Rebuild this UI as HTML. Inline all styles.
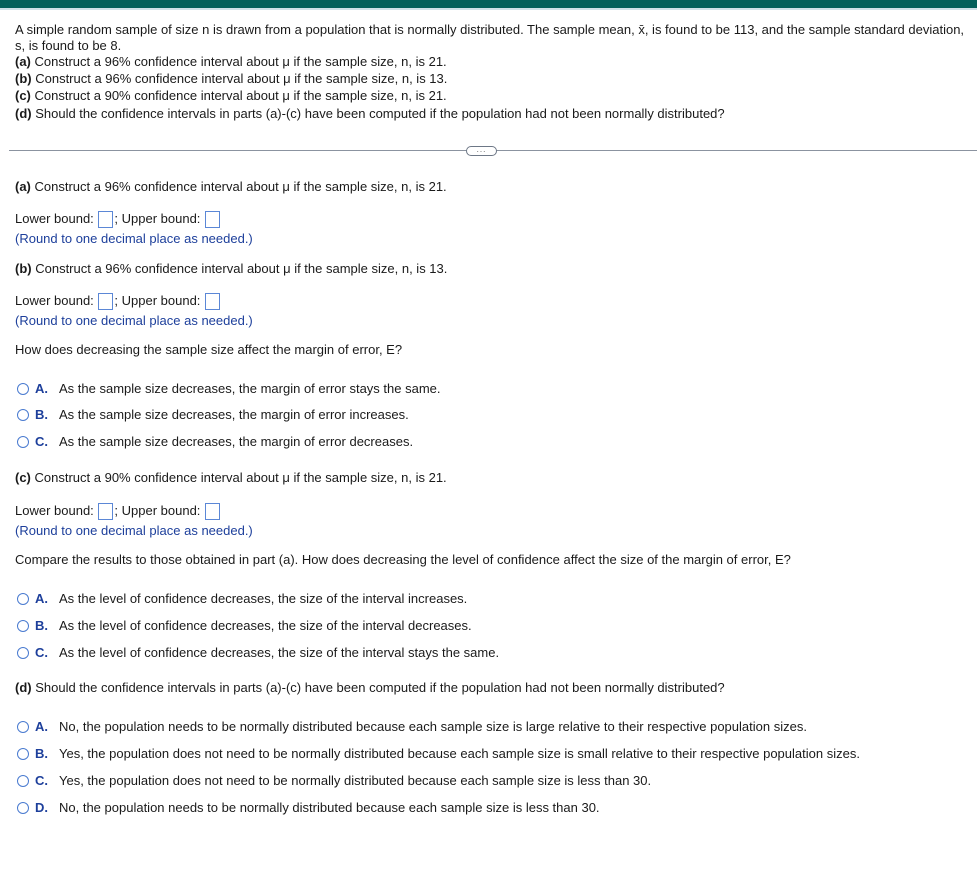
<!DOCTYPE html>
<html><head><meta charset="utf-8"><style>
*{margin:0;padding:0;box-sizing:border-box}
body{width:977px;height:872px;background:#fff;font-family:"Liberation Sans",Arial,sans-serif;font-size:13px;color:#1a1a1a;position:relative;overflow:hidden}
.bar{position:absolute;left:0;top:0;width:977px;height:8px;background:#04605a}
.bar2{position:absolute;left:0;top:8px;width:977px;height:2px;background:#cfe0e6}
.t{position:absolute;left:15px;white-space:nowrap;line-height:15px}
.blue{color:#1d3f9b}
.box{display:inline-block;width:15px;height:17px;border:1px solid #5b87d6;vertical-align:-5px;margin:0 1px}
.hr{position:absolute;left:9px;right:0;top:150px;height:1px;background:#8b93a0}
.btn{position:absolute;left:466px;top:146px;width:31px;height:10px;border:1px solid #6d7786;border-radius:5px;background:#fff;font-size:8px;line-height:5px;text-align:center;color:#555;letter-spacing:1px}
.opt{position:absolute;left:17px;white-space:nowrap;line-height:15px}
.rad{display:inline-block;width:12px;height:12px;border:1px solid #4a7bd0;border-radius:50%;vertical-align:-2px;margin-right:6px}
.lb{color:#1d3f9b;font-weight:bold;display:inline-block;width:24px}
</style></head><body>
<div class="bar"></div><div class="bar2"></div>
<div class="t" style="top:22px">A simple random sample of size n is drawn from a population that is normally distributed. The sample mean, x&#772;, is found to be 113, and the sample standard deviation,</div>
<div class="t" style="top:38px">s, is found to be 8.</div>
<div class="t" style="top:54px"><b>(a)</b> Construct a 96% confidence interval about μ if the sample size, n, is 21.</div>
<div class="t" style="top:71px"><b>(b)</b> Construct a 96% confidence interval about μ if the sample size, n, is 13.</div>
<div class="t" style="top:88px"><b>(c)</b> Construct a 90% confidence interval about μ if the sample size, n, is 21.</div>
<div class="t" style="top:106px"><b>(d)</b> Should the confidence intervals in parts (a)-(c) have been computed if the population had not been normally distributed?</div>
<div class="hr"></div><div class="btn">...</div>

<div class="t" style="top:179px"><b>(a)</b> Construct a 96% confidence interval about μ if the sample size, n, is 21.</div>
<div class="t" style="top:211px">Lower bound: <span class="box"></span>; Upper bound: <span class="box"></span></div>
<div class="t blue" style="top:231px">(Round to one decimal place as needed.)</div>
<div class="t" style="top:261px"><b>(b)</b> Construct a 96% confidence interval about μ if the sample size, n, is 13.</div>
<div class="t" style="top:293px">Lower bound: <span class="box"></span>; Upper bound: <span class="box"></span></div>
<div class="t blue" style="top:313px">(Round to one decimal place as needed.)</div>
<div class="t" style="top:342px">How does decreasing the sample size affect the margin of error, E?</div>
<div class="opt" style="top:381px"><span class="rad"></span><span class="lb">A.</span>As the sample size decreases, the margin of error stays the same.</div>
<div class="opt" style="top:407px"><span class="rad"></span><span class="lb">B.</span>As the sample size decreases, the margin of error increases.</div>
<div class="opt" style="top:434px"><span class="rad"></span><span class="lb">C.</span>As the sample size decreases, the margin of error decreases.</div>

<div class="t" style="top:470px"><b>(c)</b> Construct a 90% confidence interval about μ if the sample size, n, is 21.</div>
<div class="t" style="top:503px">Lower bound: <span class="box"></span>; Upper bound: <span class="box"></span></div>
<div class="t blue" style="top:523px">(Round to one decimal place as needed.)</div>
<div class="t" style="top:552px">Compare the results to those obtained in part (a). How does decreasing the level of confidence affect the size of the margin of error, E?</div>
<div class="opt" style="top:591px"><span class="rad"></span><span class="lb">A.</span>As the level of confidence decreases, the size of the interval increases.</div>
<div class="opt" style="top:618px"><span class="rad"></span><span class="lb">B.</span>As the level of confidence decreases, the size of the interval decreases.</div>
<div class="opt" style="top:645px"><span class="rad"></span><span class="lb">C.</span>As the level of confidence decreases, the size of the interval stays the same.</div>

<div class="t" style="top:680px"><b>(d)</b> Should the confidence intervals in parts (a)-(c) have been computed if the population had not been normally distributed?</div>
<div class="opt" style="top:719px"><span class="rad"></span><span class="lb">A.</span>No, the population needs to be normally distributed because each sample size is large relative to their respective population sizes.</div>
<div class="opt" style="top:746px"><span class="rad"></span><span class="lb">B.</span>Yes, the population does not need to be normally distributed because each sample size is small relative to their respective population sizes.</div>
<div class="opt" style="top:773px"><span class="rad"></span><span class="lb">C.</span>Yes, the population does not need to be normally distributed because each sample size is less than 30.</div>
<div class="opt" style="top:800px"><span class="rad"></span><span class="lb">D.</span>No, the population needs to be normally distributed because each sample size is less than 30.</div>
</body></html>
